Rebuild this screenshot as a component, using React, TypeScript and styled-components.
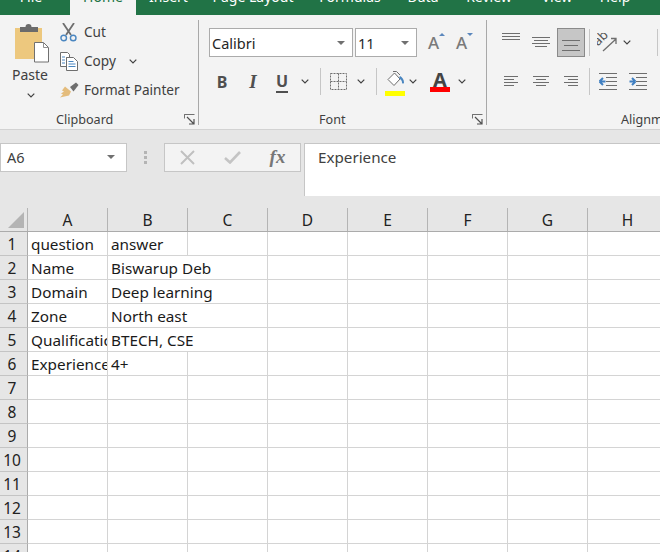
import React from "react";
import styled, { createGlobalStyle } from "styled-components";

const GlobalStyle = createGlobalStyle`
  html, body {
    margin: 0;
    padding: 0;
    background: #ffffff;
  }
  body {
    width: 660px;
    height: 552px;
    overflow: hidden;
    font-family: "Noto Sans", "Open Sans", sans-serif;
  }
`;

const Page = styled.div`
  width: 660px;
  height: 552px;
  overflow: hidden;
  color: #262626;
`;

const TabStrip = styled.div`
  display: flex;
  height: 15px;
  overflow: hidden;
  background: #217346;
`;

const Tab = styled.div<{ $w: number; $active?: boolean; $mr?: number }>`
  flex: none;
  width: ${(p) => p.$w}px;
  margin-right: ${(p) => p.$mr || 0}px;
  height: 15px;
  text-align: center;
  font-size: 14px;
  line-height: 14px;
  white-space: nowrap;
  color: ${(p) => (p.$active ? "#217346" : "#ffffff")};
  background: ${(p) => (p.$active ? "#f3f3f3" : "transparent")};

  span {
    display: block;
    margin-top: -10px;
  }
`;

const Ribbon = styled.div`
  display: flex;
  height: 114px;
  background: #f3f3f3;
  border-bottom: 1px solid #d2d2d2;
  overflow: hidden;
`;

const Group = styled.div<{ $w: number }>`
  flex: none;
  width: ${(p) => p.$w}px;
  display: flex;
  flex-direction: column;
`;

const GroupBody = styled.div<{ $pl?: number }>`
  height: 94px;
  padding-left: ${(p) => p.$pl || 0}px;
  box-sizing: border-box;
  display: flex;
  flex-direction: column;
`;

const GroupFooter = styled.div<{ $pl: number }>`
  height: 20px;
  display: flex;
  align-items: center;
  padding-left: ${(p) => p.$pl}px;
  padding-right: 3px;
  font-size: 12.6px;
  color: #404040;
  white-space: nowrap;
`;

const Launcher = styled.svg`
  flex: none;
  margin-left: auto;
  margin-top: 1px;
`;

const GroupDivider = styled.div`
  flex: none;
  width: 1px;
  height: 105px;
  margin-top: 5px;
  background: #a8a8a8;
`;

const ClipboardBody = styled.div`
  display: flex;
  height: 94px;
`;

const PasteColumn = styled.div`
  flex: none;
  width: 60px;
  display: flex;
  flex-direction: column;
  align-items: center;
  padding-top: 8px;
  box-sizing: border-box;
  font-size: 14px;
  color: #404040;

  svg:first-child {
    margin-left: 3px;
  }
`;

const PasteLabel = styled.div`
  height: 24px;
  line-height: 24px;
`;

const PasteChevron = styled.div`
  height: 12px;
  margin-top: 2px;
  margin-right: 2px;
  display: flex;
  align-items: center;
`;

const SmallButtons = styled.div`
  display: flex;
  flex-direction: column;
  padding-top: 2.5px;
`;

const SmallButton = styled.div`
  display: flex;
  align-items: center;
  height: 29px;
  font-size: 13.6px;
  color: #404040;
  white-space: nowrap;
`;

const SmallLabel = styled.span`
  margin-bottom: 2px;
`;

const SmallIcon = styled.div`
  flex: none;
  width: 24px;
  display: flex;
  align-items: center;
`;

const ButtonChevron = styled.div`
  margin-left: 13px;
  display: flex;
  align-items: center;
`;

const ToolRow = styled.div<{ $mt: number; $h: number }>`
  display: flex;
  align-items: center;
  flex: none;
  margin-top: ${(p) => p.$mt}px;
  height: ${(p) => p.$h}px;
`;

const ComboBox = styled.div<{ $w: number; $ml?: number }>`
  flex: none;
  box-sizing: border-box;
  width: ${(p) => p.$w}px;
  height: 29px;
  margin-left: ${(p) => p.$ml || 0}px;
  padding: 0 4px 0 2px;
  display: flex;
  align-items: center;
  justify-content: space-between;
  background: #ffffff;
  border: 1px solid #ababab;
  font-size: 14.5px;
  color: #262626;
`;

const Caret = styled.span<{ $color?: string }>`
  flex: none;
  width: 0;
  height: 0;
  margin-right: 3px;
  border-left: 4px solid transparent;
  border-right: 4px solid transparent;
  border-top: 4px solid ${(p) => p.$color || "#707070"};
`;

const Slot = styled.div<{ $w: number; $ml?: number; $active?: boolean }>`
  flex: none;
  box-sizing: border-box;
  width: ${(p) => p.$w}px;
  height: 100%;
  margin-left: ${(p) => p.$ml || 0}px;
  display: flex;
  align-items: center;
  justify-content: center;
  background: ${(p) => (p.$active ? "#c6c6c6" : "transparent")};
  border: ${(p) => (p.$active ? "1px solid #8a8a8a" : "none")};
`;

const ToolDivider = styled.div<{ $ml?: number }>`
  flex: none;
  width: 1px;
  height: 27px;
  margin-left: ${(p) => p.$ml || 0}px;
  background: #c6c6c6;
`;

const StyleGlyph = styled.span<{ $italic?: boolean; $underline?: boolean }>`
  font-family: ${(p) =>
    p.$italic ? '"Liberation Serif", serif' : '"Noto Sans", sans-serif'};
  font-size: ${(p) => (p.$italic ? 19 : 16)}px;
  font-weight: 700;
  font-style: ${(p) => (p.$italic ? "italic" : "normal")};
  color: #4f4f4f;
  line-height: 20px;
  border-bottom: ${(p) => (p.$underline ? "2px solid #4f4f4f" : "none")};
`;

const SizeGlyph = styled.div<{ $down?: boolean }>`
  position: relative;
  font-size: 17px;
  font-weight: 500;
  line-height: 18px;
  color: #7a7a7a;
  padding-right: 3px;

  &::after {
    content: "";
    position: absolute;
    right: -3px;
    top: -1px;
    border-left: 3px solid transparent;
    border-right: 3px solid transparent;
    ${(p) =>
      p.$down
        ? "border-top: 3px solid #5b87bd;"
        : "border-bottom: 3px solid #5b87bd;"}
  }
`;

const ColorGlyph = styled.div`
  display: flex;
  flex-direction: column;
  align-items: center;
  width: 20px;
  margin-top: 2px;
`;

const ColorLetter = styled.span`
  font-size: 20px;
  font-weight: 700;
  line-height: 14px;
  color: #444444;
`;

const ColorBar = styled.div<{ $color: string }>`
  width: 20px;
  height: 5px;
  background: ${(p) => p.$color};
`;

const FormulaBar = styled.div`
  display: flex;
  align-items: flex-start;
  height: 66px;
  padding-top: 12.5px;
  box-sizing: border-box;
  background: #e6e6e6;
`;

const NameBox = styled.div`
  flex: none;
  box-sizing: border-box;
  width: 127px;
  height: 29px;
  padding: 0 8px 0 6px;
  display: flex;
  align-items: center;
  justify-content: space-between;
  background: #ffffff;
  border: 1px solid #c6c6c6;
  font-size: 14.5px;
  color: #404040;
`;

const GripDots = styled.div`
  flex: none;
  width: 37px;
  height: 29px;
  display: flex;
  flex-direction: column;
  align-items: center;
  justify-content: center;
  gap: 2px;

  i {
    display: block;
    width: 3px;
    height: 3px;
    background: #b4b4b4;
  }
`;

const FormulaButtons = styled.div`
  flex: none;
  box-sizing: border-box;
  width: 137px;
  height: 29px;
  display: flex;
  align-items: center;
  background: #f3f3f3;
  border: 1px solid #c6c6c6;
`;

const FormulaButton = styled.div<{ $w: number }>`
  flex: none;
  width: ${(p) => p.$w}px;
  display: flex;
  align-items: center;
  justify-content: center;
`;

const FxLabel = styled.span`
  font-family: "Liberation Serif", serif;
  font-size: 19px;
  font-style: italic;
  font-weight: 700;
  color: #777777;
`;

const FormulaInput = styled.div`
  flex: 1;
  box-sizing: border-box;
  height: 54px;
  margin-left: 3px;
  padding: 2px 0 0 13px;
  background: #ffffff;
  border: 1px solid #c6c6c6;
  border-right: none;
  font-size: 15.2px;
  line-height: 22px;
  color: #404040;
`;

const Sheet = styled.div`
  display: grid;
  grid-template-columns: 28px repeat(8, 80px);
  grid-template-rows: 36px;
  grid-auto-rows: 24px;
  background: #ffffff;
  font-size: 15.3px;
`;

const HeaderCell = styled.div`
  box-sizing: border-box;
  padding-top: 12px;
  background: #e6e6e6;
  border-bottom: 1px solid #ababab;
`;

const HeaderLabel = styled.div`
  box-sizing: border-box;
  position: relative;
  height: 23px;
  line-height: 25px;
  text-align: center;
  border-right: 1px solid #b4b4b4;
  color: #222222;
  font-size: 15.5px;
`;

const CornerMark = styled.div`
  position: absolute;
  left: 8px;
  top: 4px;
  width: 0;
  height: 0;
  border-left: 16px solid transparent;
  border-bottom: 16px solid #b4b4b4;
`;

const RowHeader = styled.div`
  box-sizing: border-box;
  line-height: 25px;
  text-align: center;
  background: #e6e6e6;
  border-right: 1px solid #ababab;
  border-bottom: 1px solid #c4c4c4;
  color: #222222;
  font-size: 15.5px;
  padding-right: 3px;
`;

const Cell = styled.div<{ $spill?: boolean; $clip?: boolean }>`
  box-sizing: border-box;
  padding-left: 3px;
  line-height: 25px;
  white-space: nowrap;
  overflow: ${(p) => (p.$clip ? "hidden" : "visible")};
  color: #1a1a1a;
  border-bottom: 1px solid #d4d4d4;
  border-right: ${(p) => (p.$spill ? "none" : "1px solid #d4d4d4")};
`;

const Chevron = () => (
  <svg width="8" height="5" viewBox="0 0 8 5">
    <path d="M.7.7L4 4l3.300-3.300" fill="none" stroke="#404040" strokeWidth="1.2" />
  </svg>
);

const LauncherIcon = () => (
  <Launcher width="11" height="11" viewBox="0 0 11 11">
    <path d="M.5 4V.5h10M.5.5v3" fill="none" stroke="#707070" />
    <path d="M.5 .5V10" fill="none" stroke="#707070" strokeDasharray="4 20" />
    <path d="M3 3l6.5 6.5M10 5v5H5" fill="none" stroke="#505050" strokeWidth="1.2" />
  </Launcher>
);

const PasteIcon = () => (
  <svg width="36" height="40" viewBox="0 0 36 40">
    <rect x="1" y="5" width="27" height="31" fill="#edc87e" />
    <path d="M6 9V4h5.5a3 3 0 0 1 6 0H24v5z" fill="#6b6b6b" />
    <path d="M20.5 19.5h9l5 5v14.5h-14z" fill="#ffffff" stroke="#707070" />
    <path d="M29.5 19.5v5h5" fill="none" stroke="#909090" />
  </svg>
);

const ScissorsIcon = () => (
  <svg width="17" height="19" viewBox="0 0 17 19">
    <path d="M3 0l8 12M14 0L6 12" stroke="#6e6e6e" strokeWidth="1.8" fill="none" />
    <circle cx="3.7" cy="15" r="2.8" fill="none" stroke="#4a86c0" strokeWidth="1.4" />
    <circle cx="13.2" cy="15" r="2.8" fill="none" stroke="#4a86c0" strokeWidth="1.4" />
  </svg>
);

const CopyIcon = () => (
  <svg width="18" height="19" viewBox="0 0 18 19">
    <path d="M.5.5h7l2 2v3H6.5v9h-6z" fill="#ffffff" stroke="#6e6e6e" />
    <path d="M6.5 5.5h7l4 4v9h-11z" fill="#ffffff" stroke="#6e6e6e" />
    <path d="M2 5h3M2 8h3M2 11h3M8.5 9.5h5M8.5 12h7M8.5 14.500h7" stroke="#4a86c0" fill="none" />
  </svg>
);

const BrushIcon = () => (
  <svg width="19" height="16" viewBox="0 0 19 16">
    <path d="M5 4.500l6 5-2 4-9 2 3-3-2-1 3-2-2-1z" fill="#e4bc7c" />
    <path d="M10 5l6-4.500 2.500 2.500-5 6.500z" fill="#6e6e6e" />
  </svg>
);

const BordersIcon = () => (
  <svg width="17" height="17" viewBox="0 0 17 17">
    <path
      d="M.5.5h16v16H.5zM8.500.5v16M.5 8.500h16"
      fill="none"
      stroke="#6e6e6e"
      strokeDasharray="2 1"
    />
  </svg>
);

const FillIcon = () => (
  <svg width="20" height="21" viewBox="0 0 20 21">
    <path d="M3 9.500l6.500-6.500 5.500 6-6 6.500z" fill="#ffffff" stroke="#6e6e6e" />
    <path d="M8 1.500h3.500L15 5" fill="none" stroke="#6e6e6e" />
    <path d="M15 6c2 1 4 3.500 4 6.500 0 1.500-2 1.500-2 0 0-2-1-3-3-4z" fill="#4a86c0" />
  </svg>
);

const HLines = ({ rows }: { rows: [number, number, number][] }) => (
  <svg width="20" height="29" viewBox="0 0 20 29">
    {rows.map(([y, x1, x2]) => (
      <path
        key={y}
        d={`M${x1} ${y + 0.5}H${x2}`}
        stroke="#6e6e6e"
        strokeWidth="1"
        fill="none"
      />
    ))}
  </svg>
);

const OrientationIcon = () => (
  <svg width="20" height="19" viewBox="0 0 20 19">
    <path d="M6 18L19 6M14 5.500h5V11" fill="none" stroke="#6e6e6e" strokeWidth="1.300" />
    <text
      x="0"
      y="13"
      fontSize="13"
      fontFamily="Noto Sans, sans-serif"
      fill="#555555"
      transform="rotate(-45 1 12)"
    >
      ab
    </text>
  </svg>
);

const IndentIcon = ({ flip }: { flip?: boolean }) => (
  <svg width="18" height="17" viewBox="0 0 18 17">
    <path d="M0 .5h18M7 4.500h11M7 8.500h11M7 12.500h11M0 16.500h18" stroke="#6e6e6e" fill="none" />
    {flip ? (
      <path d="M6.500 8.500h-6M6.500 8.500L3 5M6.500 8.500L3 12" stroke="#3f7fc1" strokeWidth="2" fill="none" />
    ) : (
      <path d="M.5 8.500h6M.5 8.500L4 5M.5 8.500L4 12" stroke="#3f7fc1" strokeWidth="2" fill="none" />
    )}
  </svg>
);

const CloseIcon = () => (
  <svg width="15" height="15" viewBox="0 0 15 15">
    <path d="M1 1l13 13M14 1L1 14" stroke="#c0c0c0" strokeWidth="2" fill="none" />
  </svg>
);

const CheckIcon = () => (
  <svg width="17" height="13" viewBox="0 0 17 13">
    <path d="M1 7l5 4.500L16 1" stroke="#c4c4c4" strokeWidth="2.600" fill="none" />
  </svg>
);

const columns = ["A", "B", "C", "D", "E", "F", "G", "H"];

const rows: [string, string][] = [
  ["question", "answer"],
  ["Name", "Biswarup Deb"],
  ["Domain", "Deep learning"],
  ["Zone", "North east"],
  ["Qualification", "BTECH, CSE"],
  ["Experience", "4+"],
];

const tabs = [
  { name: "File", w: 62, mr: 8 },
  { name: "Home", w: 66, active: true },
  { name: "Insert", w: 65 },
  { name: "Page Layout", w: 104 },
  { name: "Formulas", w: 90 },
  { name: "Data", w: 56 },
  { name: "Review", w: 76 },
  { name: "View", w: 60 },
  { name: "Help", w: 56 },
];

// rows with long text in column B spill over the C gridline
const spillRows = [1, 2, 3, 4];

const App: React.FC = () => {
  return (
    <Page>
      <GlobalStyle />
      <TabStrip>
        {tabs.map((t) => (
          <Tab key={t.name} $w={t.w} $mr={t.mr} $active={t.active}>
            <span>{t.name}</span>
          </Tab>
        ))}
      </TabStrip>

      <Ribbon>
        <Group $w={198}>
          <ClipboardBody>
            <PasteColumn>
              <PasteIcon />
              <PasteLabel>Paste</PasteLabel>
              <PasteChevron>
                <Chevron />
              </PasteChevron>
            </PasteColumn>
            <SmallButtons>
              <SmallButton>
                <SmallIcon>
                  <ScissorsIcon />
                </SmallIcon>
                <SmallLabel>Cut</SmallLabel>
              </SmallButton>
              <SmallButton>
                <SmallIcon>
                  <CopyIcon />
                </SmallIcon>
                <SmallLabel>Copy</SmallLabel>
                <ButtonChevron>
                  <Chevron />
                </ButtonChevron>
              </SmallButton>
              <SmallButton>
                <SmallIcon>
                  <BrushIcon />
                </SmallIcon>
                <SmallLabel>Format Painter</SmallLabel>
              </SmallButton>
            </SmallButtons>
          </ClipboardBody>
          <GroupFooter $pl={56}>
            Clipboard
            <LauncherIcon />
          </GroupFooter>
        </Group>
        <GroupDivider />

        <Group $w={287}>
          <GroupBody $pl={10}>
            <ToolRow $mt={13} $h={29}>
              <ComboBox $w={144}>
                Calibri
                <Caret />
              </ComboBox>
              <ComboBox $w={62} $ml={2}>
                11
                <Caret />
              </ComboBox>
              <Slot $w={28} $ml={4}>
                <SizeGlyph>A</SizeGlyph>
              </Slot>
              <Slot $w={28}>
                <SizeGlyph $down>A</SizeGlyph>
              </Slot>
            </ToolRow>
            <ToolRow $mt={11} $h={27}>
              <Slot $w={26}>
                <StyleGlyph>B</StyleGlyph>
              </Slot>
              <Slot $w={36}>
                <StyleGlyph $italic>I</StyleGlyph>
              </Slot>
              <Slot $w={22}>
                <StyleGlyph $underline>U</StyleGlyph>
              </Slot>
              <Slot $w={24}>
                <Chevron />
              </Slot>
              <ToolDivider $ml={3} />
              <Slot $w={35}>
                <BordersIcon />
              </Slot>
              <Slot $w={10}>
                <Chevron />
              </Slot>
              <ToolDivider $ml={10} />
              <Slot $w={28} $ml={4}>
                <ColorGlyph>
                  <FillIcon />
                  <ColorBar $color="#ffff00" />
                </ColorGlyph>
              </Slot>
              <Slot $w={8}>
                <Chevron />
              </Slot>
              <Slot $w={36} $ml={5}>
                <ColorGlyph>
                  <ColorLetter>A</ColorLetter>
                  <ColorBar $color="#ff0000" />
                </ColorGlyph>
              </Slot>
              <Slot $w={8}>
                <Chevron />
              </Slot>
            </ToolRow>
          </GroupBody>
          <GroupFooter $pl={120}>
            Font
            <LauncherIcon />
          </GroupFooter>
        </Group>
        <GroupDivider />

        <Group $w={173}>
          <GroupBody $pl={9}>
            <ToolRow $mt={13} $h={29}>
              <Slot $w={30}>
                <HLines rows={[[5, 1, 19], [8, 1, 19], [11, 1, 19]]} />
              </Slot>
              <Slot $w={30}>
                <HLines rows={[[9, 1, 19], [12, 3, 17], [15, 1, 19], [18, 4, 16]]} />
              </Slot>
              <Slot $w={28} $ml={1} $active>
                <HLines rows={[[12, 1, 19], [17, 3, 17], [22, 1, 19]]} />
              </Slot>
              <ToolDivider $ml={4} />
              <Slot $w={33}>
                <OrientationIcon />
              </Slot>
              <Slot $w={8}>
                <Chevron />
              </Slot>
              <ToolDivider $ml={26} />
            </ToolRow>
            <ToolRow $mt={11} $h={27}>
              <Slot $w={30}>
                <HLines rows={[[9, 3, 17], [12, 3, 13], [15, 3, 17], [18, 3, 13]]} />
              </Slot>
              <Slot $w={30}>
                <HLines rows={[[9, 2, 18], [12, 5, 15], [15, 2, 18], [18, 5, 15]]} />
              </Slot>
              <Slot $w={28} $ml={1}>
                <HLines rows={[[9, 3, 17], [12, 7, 17], [15, 3, 17], [18, 7, 17]]} />
              </Slot>
              <ToolDivider $ml={4} />
              <Slot $w={36}>
                <IndentIcon />
              </Slot>
              <Slot $w={24}>
                <IndentIcon flip />
              </Slot>
            </ToolRow>
          </GroupBody>
          <GroupFooter $pl={134}>Alignment</GroupFooter>
        </Group>
      </Ribbon>

      <FormulaBar>
        <NameBox>
          A6
          <Caret />
        </NameBox>
        <GripDots>
          <i />
          <i />
          <i />
        </GripDots>
        <FormulaButtons>
          <FormulaButton $w={45}>
            <CloseIcon />
          </FormulaButton>
          <FormulaButton $w={45}>
            <CheckIcon />
          </FormulaButton>
          <FormulaButton $w={45}>
            <FxLabel>fx</FxLabel>
          </FormulaButton>
        </FormulaButtons>
        <FormulaInput>Experience</FormulaInput>
      </FormulaBar>

      <Sheet>
        <HeaderCell>
          <HeaderLabel>
            <CornerMark />
          </HeaderLabel>
        </HeaderCell>
        {columns.map((c) => (
          <HeaderCell key={c}>
            <HeaderLabel>{c}</HeaderLabel>
          </HeaderCell>
        ))}
        {Array.from({ length: 14 }, (_, r) => (
          <React.Fragment key={r}>
            <RowHeader>{r + 1}</RowHeader>
            {columns.map((c, i) => (
              <Cell
                key={c}
                $clip={i === 0}
                $spill={i === 1 && spillRows.includes(r)}
              >
                {i < 2 && rows[r] ? rows[r][i] : ""}
              </Cell>
            ))}
          </React.Fragment>
        ))}
      </Sheet>
    </Page>
  );
};

export default App;
